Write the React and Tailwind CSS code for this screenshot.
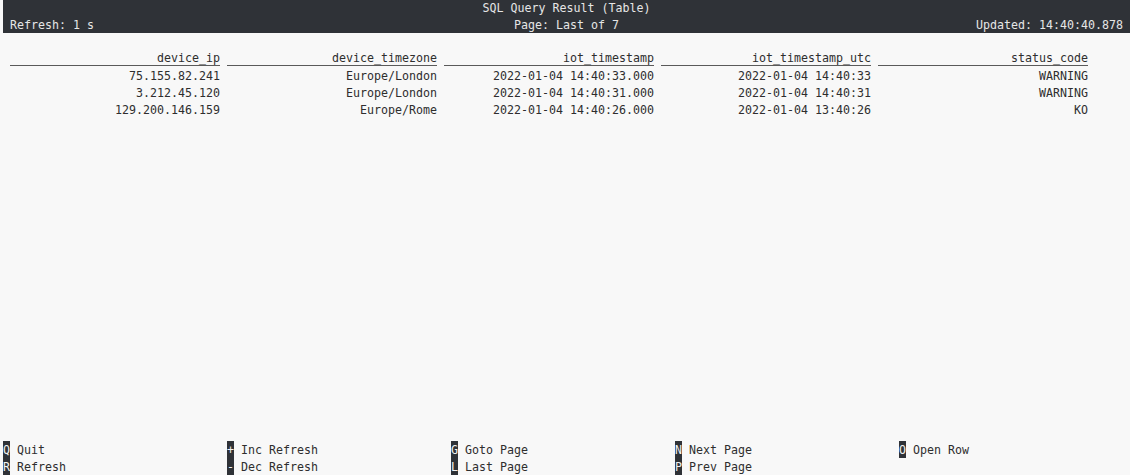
const columns = [
  { key: 'device_ip', label: 'device_ip' },
  { key: 'device_timezone', label: 'device_timezone' },
  { key: 'iot_timestamp', label: 'iot_timestamp' },
  { key: 'iot_timestamp_utc', label: 'iot_timestamp_utc' },
  { key: 'status_code', label: 'status_code' },
]

const rows = [
  {
    device_ip: '75.155.82.241',
    device_timezone: 'Europe/London',
    iot_timestamp: '2022-01-04 14:40:33.000',
    iot_timestamp_utc: '2022-01-04 14:40:33',
    status_code: 'WARNING',
  },
  {
    device_ip: '3.212.45.120',
    device_timezone: 'Europe/London',
    iot_timestamp: '2022-01-04 14:40:31.000',
    iot_timestamp_utc: '2022-01-04 14:40:31',
    status_code: 'WARNING',
  },
  {
    device_ip: '129.200.146.159',
    device_timezone: 'Europe/Rome',
    iot_timestamp: '2022-01-04 14:40:26.000',
    iot_timestamp_utc: '2022-01-04 13:40:26',
    status_code: 'KO',
  },
]

// footer shortcuts, laid out in 5 columns of 2 lines
const shortcuts = [
  [{ k: 'Q', label: 'Quit' }, { k: 'R', label: 'Refresh' }],
  [{ k: '+', label: 'Inc Refresh' }, { k: '-', label: 'Dec Refresh' }],
  [{ k: 'G', label: 'Goto Page' }, { k: 'L', label: 'Last Page' }],
  [{ k: 'N', label: 'Next Page' }, { k: 'P', label: 'Prev Page' }],
  [{ k: 'O', label: 'Open Row' }],
]

function Key({ k, label }) {
  return (
    <div className="flex h-[17px]">
      <span className="h-[17px] w-[7px] bg-[#2f3237] text-center text-[#f2f2f2]">{k}</span>
      <span className="pl-[7px] whitespace-pre">{label}</span>
    </div>
  )
}

export default function App() {
  return (
    <div
      className="mt-[-1px] flex h-[476px] w-[1130px] flex-col overflow-hidden bg-[#f8f8f8] pl-[3px] text-[11.63px] leading-[19px] text-[#2e2e2e]"
      style={{ fontFamily: '"DejaVu Sans Mono", "Liberation Mono", monospace' }}
    >
      <div className="flex flex-col bg-[#2f3237] px-[7px] text-[#e6e6e6]">
        <div className="h-[17px] text-center">SQL Query Result (Table)</div>
        <div className="grid h-[17px] grid-cols-3">
          <span className="whitespace-pre">Refresh: 1 s</span>
          <span className="text-center whitespace-pre">Page: Last of 7</span>
          <span className="text-right whitespace-pre">Updated: 14:40:40.878</span>
        </div>
      </div>

      <div className="h-[17px]" />

      <div className="flex flex-col pl-[7px]">
        <div className="flex gap-[7px]">
          {columns.map((c) => (
            <div key={c.key} className="mb-[1px] h-[16px] w-[210px] border-b border-[#5a5a5a] text-right leading-[17px]">
              {c.label}
            </div>
          ))}
        </div>
        {rows.map((r, i) => (
          <div key={i} className="flex h-[17px] gap-[7px]">
            {columns.map((c) => (
              <div key={c.key} className="w-[210px] text-right whitespace-pre">
                {r[c.key]}
              </div>
            ))}
          </div>
        ))}
      </div>

      <div className="flex-1" />

      <div className="flex">
        {shortcuts.map((col, i) => (
          <div key={i} className="flex w-[224px] flex-col">
            {col.map((s) => (
              <Key key={s.k} k={s.k} label={s.label} />
            ))}
          </div>
        ))}
      </div>
    </div>
  )
}
